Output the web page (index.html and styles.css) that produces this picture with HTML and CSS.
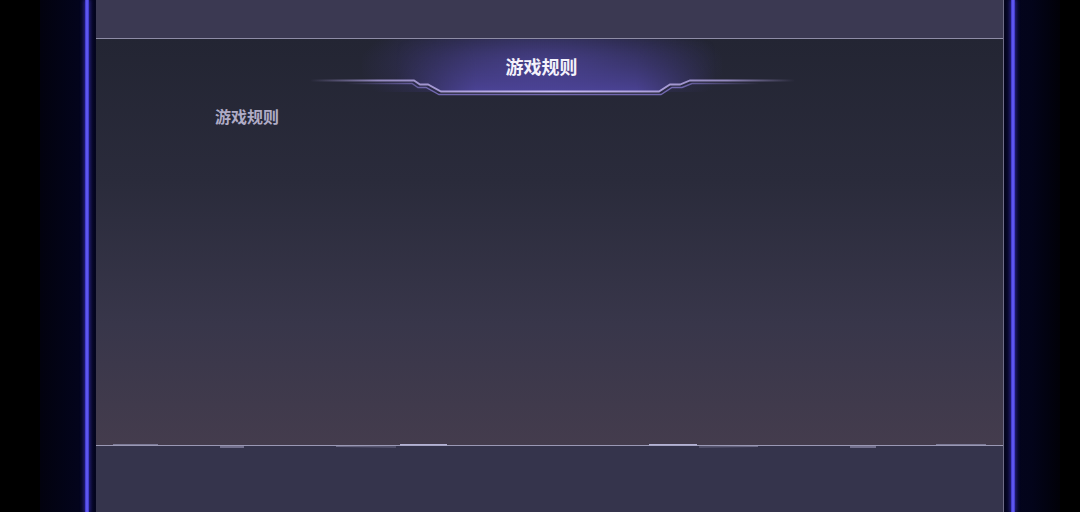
FILE: index.html
```html
<!DOCTYPE html>
<html lang="zh-CN">
<head>
<meta charset="utf-8">
<title>游戏规则</title>
<link rel="stylesheet" href="styles.css">
</head>
<body>
<div class="screen">
  <div class="edge edge-left"><div class="glow-line"></div></div>
  <main class="sheet">
    <div class="sheet-top"></div>
    <section class="rules">
      <div class="rules-glow"></div>
      <svg class="rules-frame" viewBox="0 0 907 70" width="907" height="70" aria-hidden="true">
        <defs>
          <linearGradient id="plate" x1="0" y1="0" x2="0" y2="1">
            <stop offset="0" stop-color="#4a4290" stop-opacity="0"/>
            <stop offset="0.5" stop-color="#4c4398" stop-opacity="0.35"/>
            <stop offset="1" stop-color="#5248a6" stop-opacity="0.8"/>
          </linearGradient>
          <linearGradient id="plateFade" x1="0" y1="0" x2="1" y2="0">
            <stop offset="0" stop-color="#fff" stop-opacity="0"/>
            <stop offset="0.25" stop-color="#fff" stop-opacity="1"/>
            <stop offset="0.75" stop-color="#fff" stop-opacity="1"/>
            <stop offset="1" stop-color="#fff" stop-opacity="0"/>
          </linearGradient>
          <mask id="plateMask">
            <rect x="300" y="0" width="320" height="60" fill="url(#plateFade)"/>
          </mask>
          <linearGradient id="rim" x1="0" y1="0" x2="1" y2="0">
            <stop offset="0" stop-color="#a89ad8" stop-opacity="0"/>
            <stop offset="0.14" stop-color="#a89ad8" stop-opacity="0.85"/>
            <stop offset="0.5" stop-color="#c8bcf4"/>
            <stop offset="0.86" stop-color="#a89ad8" stop-opacity="0.85"/>
            <stop offset="1" stop-color="#a89ad8" stop-opacity="0"/>
          </linearGradient>
          <linearGradient id="rim2" x1="0" y1="0" x2="1" y2="0">
            <stop offset="0" stop-color="#7268b0" stop-opacity="0"/>
            <stop offset="0.2" stop-color="#7268b0"/>
            <stop offset="0.8" stop-color="#7268b0"/>
            <stop offset="1" stop-color="#7268b0" stop-opacity="0"/>
          </linearGradient>
        </defs>
        <path d="M300 0 L620 0 L620 41 L594 41 L584 45 L574 45 L563 53 L345 53 L332 45 L324 45 L318 41 L300 41 Z" fill="url(#plate)" mask="url(#plateMask)"/>
        <path d="M214 41.5 L318 41.5 L324 45.5 L332 45.5 L345 52.5 L563 52.5 L574 45.5 L584 45.5 L594 41.5 L699 41.5" fill="none" stroke="url(#rim)" stroke-width="1.8"/>
        <path d="M250 44.5 L316 44.5 L322 48.5 L330 48.5 L343 55.5 L565 55.5 L576 48.5 L586 48.5 L596 44.5 L664 44.5" fill="none" stroke="url(#rim2)" stroke-width="1.4"/>
      </svg>
      <h1 class="rules-title">游戏规则</h1>
      <h2 class="rules-heading">游戏规则</h2>
    </section>
    <div class="sheet-bottom">
      <svg class="seam" viewBox="0 0 907 6" width="907" height="6" aria-hidden="true">
        <line x1="0" y1="1.5" x2="907" y2="1.5" stroke="#9a98b4" stroke-width="1.2"/>
        <path d="M17 0.5 L62 0.5" stroke="#7e7c98" stroke-width="1.2"/>
        <path d="M124 3 L148 3" stroke="#8e8caa" stroke-width="1.4"/>
        <path d="M240 2.5 L300 3" stroke="#6e6c88" stroke-width="1"/>
        <path d="M304 0.5 L351 0.5" stroke="#b4b2d4" stroke-width="1.8"/>
        <path d="M553 0.5 L601 0.5" stroke="#b4b2d4" stroke-width="1.8"/>
        <path d="M603 3 L662 2.5" stroke="#6e6c88" stroke-width="1"/>
        <path d="M754 3 L780 3" stroke="#8e8caa" stroke-width="1.4"/>
        <path d="M840 0.5 L890 0.5" stroke="#7e7c98" stroke-width="1.2"/>
      </svg>
    </div>
  </main>
  <div class="edge edge-right"><div class="glow-line"></div></div>
</div>
</body>
</html>
```

FILE: styles.css
```css
html, body {
  margin: 0;
  padding: 0;
  height: 100%;
  background: #000;
}

body {
  font-family: "Noto Sans CJK SC", "Noto Sans", sans-serif;
  overflow: hidden;
}

.screen {
  display: flex;
  width: 1080px;
  height: 512px;
  padding: 0 20px 0 40px;
  box-sizing: border-box;
  background: #000;
}

/* side rails with the neon strip */
.edge {
  display: flex;
  flex: 0 0 56px;
  height: 100%;
}

.edge-left {
  justify-content: flex-end;
  padding-right: 7px;
  box-sizing: border-box;
  background: linear-gradient(90deg, #02020e 0%, #03041c 70%, #04051e 100%);
}

.edge-right {
  padding-left: 7px;
  box-sizing: border-box;
  background: linear-gradient(90deg, #04051e 0%, #03041a 50%, #010108 100%);
}

.glow-line {
  width: 4px;
  height: 100%;
  background: linear-gradient(90deg, #3a34c0, #6a62ff 50%, #3a34c0);
  box-shadow: 0 0 4px 1px rgba(80, 70, 255, 0.55);
}

/* main sheet */
.sheet {
  display: flex;
  flex-direction: column;
  flex: 0 0 908px;
  height: 100%;
  border-right: 1px solid #6e6c86;
  box-sizing: border-box;
  background: #35344c;
}

.sheet-top {
  flex: 0 0 38px;
  background: #3b3952;
  border-bottom: 1px solid #8e8ca6;
}

.rules {
  position: relative;
  flex: 0 0 407px;
  background: linear-gradient(180deg, #232533 0%, #2a2b3b 35%, #38364a 70%, #443c4d 100%);
  overflow: hidden;
}

.rules-glow {
  position: absolute;
  left: 266px;
  top: -32px;
  width: 360px;
  height: 85px;
  background: radial-gradient(ellipse at 50% 70%, rgba(96, 82, 200, 0.55) 0%, rgba(80, 68, 170, 0.28) 42%, rgba(60, 50, 130, 0) 72%);
}

.rules-frame {
  position: absolute;
  left: 0;
  top: 0;
}

.rules-title {
  position: relative;
  margin: 15px 0 0;
  text-align: center;
  font-size: 18px;
  line-height: 24px;
  font-weight: 700;
  color: #f4f2fb;
  transform: translateX(-8px);
}

.rules-heading {
  position: relative;
  margin: 28px 0 0 119px;
  font-size: 16px;
  line-height: 20px;
  font-weight: 700;
  color: #b0acc6;
}

.sheet-bottom {
  flex: 1 1 auto;
  position: relative;
  background: #35344c;
}

.seam {
  display: block;
  margin-top: -2px;
}
```
